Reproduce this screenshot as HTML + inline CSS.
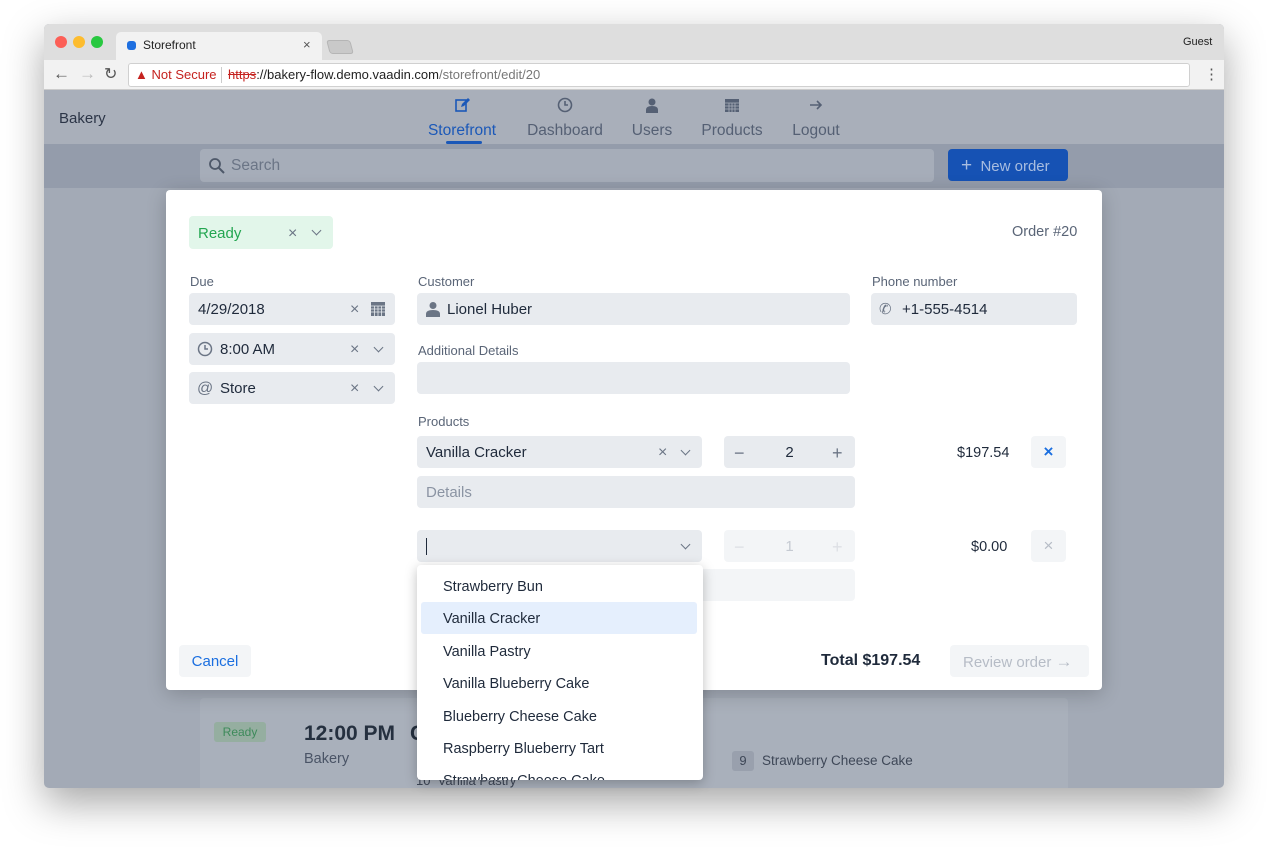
<!DOCTYPE html>
<html><head><meta charset="utf-8"><style>
*{box-sizing:border-box;margin:0;padding:0}
body{width:1267px;height:855px;background:#fff;font-family:"Liberation Sans",sans-serif;position:relative;overflow:hidden;color:#1a2333}
.a{position:absolute}
.win{left:44px;top:24px;width:1180px;height:764px;box-shadow:0 15px 40px rgba(0,0,0,.35);border-radius:5px;overflow:hidden;background:#a3aab6}
.fld{position:absolute;background:#e8ebef;border-radius:4px;height:32px;font-size:15px;line-height:34px;padding-left:9px;color:#1f2a3b}
.lbl{position:absolute;font-size:13px;color:#5a6577}
.x{position:absolute;font-size:16px;color:#6b7585;top:0}
.chev{position:absolute;width:7px;height:7px;border-right:1.6px solid #6b7585;border-bottom:1.6px solid #6b7585;transform:rotate(45deg);top:11px}
.nav{position:absolute;top:90px;text-align:center;font-size:15px;color:#556074}
.item{position:absolute;left:4px;width:276px;height:32px;font-size:14.5px;line-height:34px;padding-left:22px;color:#1f2a3b}
</style></head><body>
<div class="a win">
 <div class="a" style="left:0;top:0;width:1180px;height:36px;background:#dedede"></div>
 <div class="a" style="left:11px;top:12px;width:12px;height:12px;border-radius:50%;background:#fc5f57"></div>
 <div class="a" style="left:29px;top:12px;width:12px;height:12px;border-radius:50%;background:#fdbc2e"></div>
 <div class="a" style="left:47px;top:12px;width:12px;height:12px;border-radius:50%;background:#28c840"></div>
 <div class="a" style="left:72px;top:8px;width:206px;height:28px;background:#f2f2f2;border-radius:5px 5px 0 0"></div>
 <div class="a" style="left:83px;top:17px;width:9px;height:9px;background:#1e6fe0;border-radius:3px"></div>
 <div class="a" style="left:99px;top:14px;font-size:12px;color:#222">Storefront</div>
 <div class="a" style="left:259px;top:13px;font-size:13px;color:#555">×</div>
 <div class="a" style="left:284px;top:16px;width:24px;height:14px;background:#c9c9c9;border:1px solid #b5b5b5;border-radius:3px;transform:skewX(15deg)"></div>
 <div class="a" style="left:1139px;top:12px;font-size:11px;color:#222">Guest</div>
 <div class="a" style="left:0;top:36px;width:1180px;height:30px;background:#f2f2f2;border-bottom:1px solid #ccc"></div>
 <div class="a" style="left:9px;top:40px;font-size:17px;color:#555">←</div>
 <div class="a" style="left:35px;top:40px;font-size:17px;color:#bbb">→</div>
 <div class="a" style="left:60px;top:40px;font-size:16px;color:#555">↻</div>
 <div class="a" style="left:84px;top:39px;width:1062px;height:24px;background:#fff;border:1px solid #d0d0d0;border-radius:3px"></div>
 <div class="a" style="left:91px;top:43px;font-size:13px;color:#c5221f">▲ Not Secure</div>
 <div class="a" style="left:177px;top:43px;width:1px;height:16px;background:#ccc"></div>
 <div class="a" style="left:184px;top:43px;font-size:13px;color:#222"><span style="color:#c5221f;text-decoration:line-through">https</span>://bakery-flow.demo.vaadin.com<span style="color:#777">/storefront/edit/20</span></div>
 <div class="a" style="left:1160px;top:41px;font-size:15px;color:#555">⋮</div>
 <div class="a" style="left:0;top:66px;width:1180px;height:54px;background:#a9afba"></div>
 <div class="a" style="left:15px;top:86px;font-size:15px;color:#2c3547">Bakery</div>
 <div class="nav" style="left:378px;top:73px;width:80px;color:#1b58b8;font-size:15.5px"><svg width="16" height="16" viewBox="0 0 16 16"><rect x="2" y="3" width="10" height="11" fill="none" stroke="#1b58b8" stroke-width="1.6"/><path d="M7 10l1-3 6-6 2 2-6 6z" fill="#1b58b8"/></svg><div style="margin-top:4px">Storefront</div></div>
 <div class="a" style="left:402px;top:117px;width:36px;height:3px;background:#1b58b8;border-radius:2px"></div>
 <div class="nav" style="left:479px;top:73px;width:84px;font-size:15.5px"><svg width="16" height="16"><circle cx="8" cy="8" r="6.5" fill="none" stroke="#556074" stroke-width="1.6"/><path d="M8 4v4h3" fill="none" stroke="#556074" stroke-width="1.6"/></svg><div style="margin-top:4px">Dashboard</div></div>
 <div class="nav" style="left:584px;top:73px;width:48px;font-size:15.5px"><svg width="16" height="16"><circle cx="8" cy="5" r="3.5" fill="#556074"/><path d="M2 16v-3q0-4 6-4t6 4v3z" fill="#556074"/></svg><div style="margin-top:4px">Users</div></div>
 <div class="nav" style="left:653px;top:73px;width:70px;font-size:15.5px"><svg width="16" height="16"><rect x="1" y="2" width="14" height="13" fill="#556074"/><g stroke="#a9afba" stroke-width=".8"><path d="M1 6h14M1 9h14M1 12h14M5 6v9M8 6v9M11 6v9"/></g></svg><div style="margin-top:4px">Products</div></div>
 <div class="nav" style="left:744px;top:73px;width:56px;font-size:15.5px"><svg width="16" height="16"><path d="M2 8h11M9 4l4 4-4 4" fill="none" stroke="#556074" stroke-width="1.6"/></svg><div style="margin-top:4px">Logout</div></div>
 <div class="a" style="left:0;top:120px;width:1180px;height:44px;background:#949cab"></div>
 <div class="a" style="left:156px;top:125px;width:734px;height:33px;background:#a6adb9;border-radius:4px"></div>
 <svg class="a" style="left:164px;top:133px" width="18" height="18"><circle cx="7" cy="7" r="5" fill="none" stroke="#4e5869" stroke-width="1.8"/><path d="M11 11l5 5" stroke="#4e5869" stroke-width="2"/></svg>
 <div class="a" style="left:187px;top:133px;font-size:15.5px;color:#6b7586">Search</div>
 <div class="a" style="left:904px;top:125px;width:120px;height:32px;background:#1652b4;border-radius:4px;color:#a8bde0;font-size:15px;line-height:33px;padding-left:13px"><span style="font-size:19px">+</span>&nbsp; New order</div>
 <div class="a" style="left:156px;top:674px;width:868px;height:100px;background:#a9b0bb;border-radius:4px"></div>
 <div class="a" style="left:170px;top:698px;width:52px;height:20px;background:#95aea0;border-radius:3px;color:#3d8a5a;font-size:12px;line-height:20px;text-align:center">Ready</div>
 <div class="a" style="left:260px;top:698px;font-size:21px;font-weight:bold;color:#25303f">12:00 PM</div>
 <div class="a" style="left:366px;top:698px;font-size:21px;font-weight:bold;color:#25303f">C</div>
 <div class="a" style="left:260px;top:727px;font-size:14.5px;color:#4a5466">Bakery</div>
 <div class="a" style="left:688px;top:727px;width:22px;height:20px;background:#99a0ad;border-radius:3px;font-size:13px;color:#3e4757;text-align:center;line-height:20px">9</div>
 <div class="a" style="left:718px;top:729px;font-size:13.5px;color:#3e4757">Strawberry Cheese Cake</div>
 <div class="a" style="left:372px;top:749px;font-size:13px;color:#3e4757">10&nbsp;&nbsp;Vanilla Pastry</div>
</div>

<div class="a" style="left:166px;top:190px;width:936px;height:500px;background:#fff;border-radius:4px;box-shadow:0 4px 20px rgba(0,0,0,.2)"></div>
<div class="a" style="left:189px;top:216px;width:144px;height:33px;background:#e2f6ea;border-radius:4px;color:#23a651;font-size:15px;line-height:35px;padding-left:9px">Ready<span class="x" style="left:99px;top:0;color:#6b7585">×</span><span class="chev" style="left:124px"></span></div>
<div class="a" style="left:1012px;top:224px;font-size:14.5px;color:#5a6577">Order #20</div>

<div class="lbl" style="left:190px;top:274px">Due</div>
<div class="fld" style="left:189px;top:293px;width:206px">4/29/2018<span class="x" style="left:161px">×</span><svg class="a" style="left:182px;top:9px" width="14" height="14"><rect x="0" y="0" width="14" height="14" fill="#6b7585"/><g stroke="#e8ebef" stroke-width=".8"><path d="M0 4h14M0 7h14M0 10h14M3.5 4v10M7 4v10M10.5 4v10"/></g></svg></div>
<div class="fld" style="left:189px;top:333px;width:206px;padding-left:31px">8:00 AM<svg class="a" style="left:8px;top:8px" width="16" height="16"><circle cx="8" cy="8" r="6.5" fill="none" stroke="#6b7585" stroke-width="1.5"/><path d="M8 4v4h3" fill="none" stroke="#6b7585" stroke-width="1.5"/></svg><span class="x" style="left:161px">×</span><span class="chev" style="left:186px"></span></div>
<div class="fld" style="left:189px;top:372px;width:206px;padding-left:31px"><span class="a" style="left:8px;top:0;color:#6b7585;font-size:16px">@</span>Store<span class="x" style="left:161px">×</span><span class="chev" style="left:186px"></span></div>

<div class="lbl" style="left:418px;top:274px">Customer</div>
<div class="fld" style="left:417px;top:293px;width:433px;padding-left:30px"><svg class="a" style="left:9px;top:8px" width="14" height="16"><circle cx="7" cy="4.5" r="3.5" fill="#6b7585"/><path d="M0 16v-3q0-4 7-4t7 4v3z" fill="#6b7585"/></svg>Lionel Huber</div>
<div class="lbl" style="left:418px;top:343px">Additional Details</div>
<div class="fld" style="left:417px;top:362px;width:433px"></div>
<div class="lbl" style="left:872px;top:274px">Phone number</div>
<div class="fld" style="left:871px;top:293px;width:206px;padding-left:31px"><span class="a" style="left:8px;top:0;color:#6b7585;font-size:15px">✆</span>+1-555-4514</div>

<div class="lbl" style="left:418px;top:414px">Products</div>
<div class="fld" style="left:417px;top:436px;width:285px">Vanilla Cracker<span class="x" style="left:241px">×</span><span class="chev" style="left:265px"></span></div>
<div class="fld" style="left:724px;top:436px;width:131px;padding:0;text-align:center">2<span class="x" style="left:10px;font-size:18px">−</span><span class="x" style="left:108px;font-size:18px">+</span></div>
<div class="a" style="left:957px;top:445px;font-size:14.5px;color:#1f2a3b">$197.54</div>
<div class="a" style="left:1031px;top:436px;width:35px;height:32px;background:#f3f5f7;border-radius:4px;color:#1b6fe0;font-size:17px;text-align:center;line-height:32px;font-weight:bold">×</div>
<div class="fld" style="left:417px;top:476px;width:438px;color:#8b94a3">Details</div>

<div class="fld" style="left:417px;top:530px;width:285px"><span class="a" style="left:9px;top:8px;width:1px;height:17px;background:#1f2a3b"></span><span class="chev" style="left:265px"></span></div>
<div class="fld" style="left:724px;top:530px;width:131px;padding:0;text-align:center;background:#f3f5f7;color:#c5cad2">1<span class="x" style="left:10px;color:#dde0e5;font-size:18px">−</span><span class="x" style="left:108px;color:#dde0e5;font-size:18px">+</span></div>
<div class="a" style="left:971px;top:539px;font-size:14.5px;color:#1f2a3b">$0.00</div>
<div class="a" style="left:1031px;top:530px;width:35px;height:32px;background:#f3f5f7;border-radius:4px;color:#b6bcc6;font-size:17px;text-align:center;line-height:32px">×</div>
<div class="a" style="left:700px;top:569px;width:155px;height:32px;background:#f3f5f7;border-radius:4px"></div>

<div class="a" style="left:179px;top:645px;width:72px;height:32px;background:#f3f5f7;border-radius:4px;color:#1b6fe0;font-size:15px;line-height:34px;text-align:center">Cancel</div>
<div class="a" style="left:821px;top:652px;font-size:16px;font-weight:bold;color:#1f2a3b">Total $197.54</div>
<div class="a" style="left:950px;top:645px;width:139px;height:32px;background:#f3f5f7;border-radius:4px;color:#b6bcc6;font-size:15px;line-height:34px;padding-left:13px">Review order <span style="font-size:17px">→</span></div>

<div class="a" style="left:417px;top:565px;width:286px;height:215px;background:#fff;border-radius:4px;box-shadow:0 3px 12px rgba(0,0,0,.25);overflow:hidden">
 <div class="item" style="top:5px">Strawberry Bun</div>
 <div class="item" style="top:37px;background:#e5effd;border-radius:3px">Vanilla Cracker</div>
 <div class="item" style="top:70px">Vanilla Pastry</div>
 <div class="item" style="top:102px">Vanilla Blueberry Cake</div>
 <div class="item" style="top:135px">Blueberry Cheese Cake</div>
 <div class="item" style="top:167px">Raspberry Blueberry Tart</div>
 <div class="item" style="top:199px">Strawberry Cheese Cake</div>
</div>
</body></html>
